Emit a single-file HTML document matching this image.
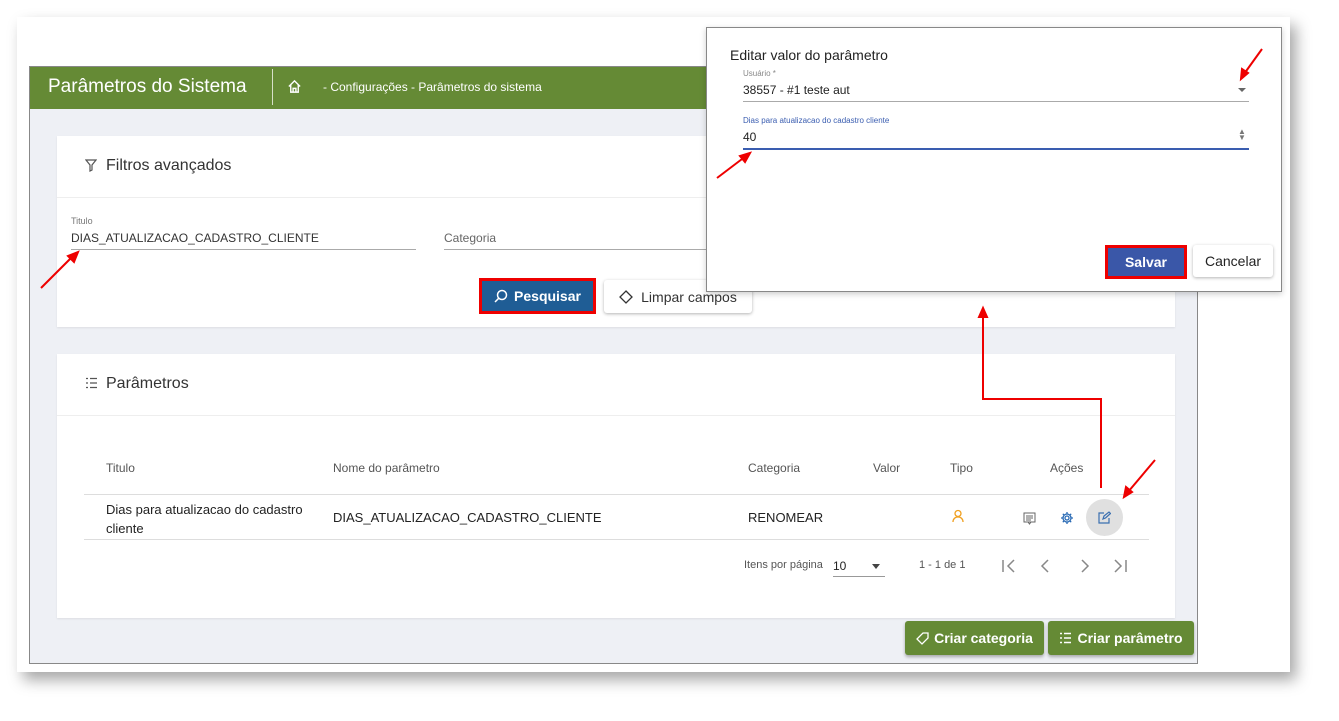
<!DOCTYPE html>
<html><head><meta charset="utf-8"><style>
*{box-sizing:border-box;margin:0;padding:0}
body{width:1339px;height:721px;background:#fff;font-family:"Liberation Sans",Arial,sans-serif;position:relative;overflow:hidden;color:#222}
.abs{position:absolute}
.page{left:17px;top:17px;width:1273px;height:655px;background:#fff;box-shadow:6px 8px 14px rgba(0,0,0,.35)}
.frame{left:29px;top:66px;width:1169px;height:598px;border:1px solid #888;background:#eef0f5}
.hdr{left:30px;top:67px;width:1167px;height:42px;background:#658a35;color:#fff}
.card{background:#fff;box-shadow:0 1px 2px rgba(0,0,0,.08)}
.t{position:absolute;white-space:nowrap}
.btn{position:absolute;border-radius:3px;font-size:14px;display:flex;align-items:center;justify-content:center}
</style></head><body>
<div class="abs page"></div>
<div class="abs frame"></div>
<div class="abs hdr">
 <div class="t" style="left:18px;top:9px;font-size:19px">Parâmetros do Sistema</div>
 <div class="abs" style="left:242px;top:2px;width:1px;height:36px;background:#d7e0c8"></div>
 <svg class="abs" style="left:257px;top:12px" width="15" height="15" viewBox="0 0 16 16" fill="none" stroke="#fff" stroke-width="1.5"><path d="M2 8 8 2l6 6M4 6.5V14h8V6.5M6.5 14v-4h3v4"/></svg>
 <div class="t" style="left:293px;top:13px;font-size:12px">- Configurações - Parâmetros do sistema</div>
</div>
<div class="abs card" style="left:57px;top:136px;width:1118px;height:191px">
 <svg class="abs" style="left:28px;top:23px" width="12" height="13" viewBox="0 0 12 13" fill="none" stroke="#555" stroke-width="1.2"><path d="M1 1h10L7 6v5l-2 1V6z"/></svg>
 <div class="t" style="left:49px;top:21px;font-size:16px;color:#333">Filtros avançados</div>
 <div class="abs" style="left:0;top:61px;width:1118px;height:1px;background:#eee"></div>
 <div class="t" style="left:14px;top:80px;font-size:9px;color:#777">Titulo</div>
 <div class="t" style="left:14px;top:95px;font-size:12px;color:#333">DIAS_ATUALIZACAO_CADASTRO_CLIENTE</div>
 <div class="abs" style="left:14px;top:113px;width:345px;height:1px;background:#aaa"></div>
 <div class="t" style="left:387px;top:95px;font-size:12px;color:#666">Categoria</div>
 <div class="abs" style="left:387px;top:113px;width:270px;height:1px;background:#aaa"></div>
</div>
<div class="btn" style="left:479px;top:278px;width:117px;height:36px;background:#1f5d95;border:3px solid #e00;color:#fff;font-weight:bold;border-radius:0">
 <svg width="14" height="14" viewBox="0 0 14 14" fill="none" stroke="#fff" stroke-width="1.5" style="margin-right:6px"><circle cx="8" cy="6" r="4.5"/><path d="M4.8 9.2 1 13"/></svg>Pesquisar</div>
<div class="btn" style="left:604px;top:280px;width:148px;height:33px;background:#fff;box-shadow:0 1px 3px rgba(0,0,0,.3);color:#333">
 <svg width="14" height="14" viewBox="0 0 14 14" fill="none" stroke="#333" stroke-width="1.3" style="margin-right:8px"><path d="M7 1l6 6-6 6-6-6z"/></svg>Limpar campos</div>
<div class="abs card" style="left:57px;top:354px;width:1118px;height:264px">
 <svg class="abs" style="left:28px;top:23px" width="13" height="12" viewBox="0 0 13 12" fill="none" stroke="#555" stroke-width="1.2"><path d="M1 1.5h2M1 6h2M1 10.5h2M5 1.5h7M5 6h7M5 10.5h7"/></svg>
 <div class="t" style="left:49px;top:21px;font-size:16px;color:#333">Parâmetros</div>
 <div class="abs" style="left:0;top:61px;width:1118px;height:1px;background:#eee"></div>
 <div class="t" style="left:49px;top:107px;font-size:12px;color:#555">Titulo</div>
 <div class="t" style="left:276px;top:107px;font-size:12px;color:#555">Nome do parâmetro</div>
 <div class="t" style="left:691px;top:107px;font-size:12px;color:#555">Categoria</div>
 <div class="t" style="left:816px;top:107px;font-size:12px;color:#555">Valor</div>
 <div class="t" style="left:893px;top:107px;font-size:12px;color:#555">Tipo</div>
 <div class="t" style="left:993px;top:107px;font-size:12px;color:#555">Ações</div>
 <div class="abs" style="left:27px;top:140px;width:1065px;height:1px;background:#ddd"></div>
 <div class="t" style="left:49px;top:146px;font-size:13px;color:#222;line-height:19px">Dias para atualizacao do cadastro<br>cliente</div>
 <div class="t" style="left:276px;top:156px;font-size:13px;color:#222">DIAS_ATUALIZACAO_CADASTRO_CLIENTE</div>
 <div class="t" style="left:691px;top:156px;font-size:13px;color:#222">RENOMEAR</div>
 <svg class="abs" style="left:895px;top:155px" width="12" height="14" viewBox="0 0 12 14" fill="none" stroke="#f0a020" stroke-width="1.3"><circle cx="6" cy="4.5" r="3"/><path d="M1 13c0-3 2-5 5-5s5 2 5 5"/></svg>
 <svg class="abs" style="left:966px;top:158px" width="13" height="13" viewBox="0 0 13 13" fill="none" stroke="#666" stroke-width="1"><rect x="1" y="1" width="11" height="9"/><path d="M3 4h7M3 6h7M3 8h5M5 10l1.5 2 1.5-2"/></svg>
 <svg class="abs" style="left:1003px;top:157px" width="14" height="14" viewBox="0 0 14 14" fill="none" stroke="#2a6bb5" stroke-width="1.3"><circle cx="7" cy="7" r="2"/><path d="M7 1v2M7 11v2M1 7h2M11 7h2M2.8 2.8l1.4 1.4M9.8 9.8l1.4 1.4M2.8 11.2l1.4-1.4M9.8 4.2l1.4-1.4"/><circle cx="7" cy="7" r="4"/></svg>
 <div class="abs" style="left:1029px;top:145px;width:37px;height:37px;border-radius:50%;background:#e0e0e0"></div>
 <svg class="abs" style="left:1041px;top:157px" width="13" height="13" viewBox="0 0 13 13" fill="none" stroke="#3a6fb0" stroke-width="1.2"><path d="M6 2H1v10h10V7M5 8l1-3 5-4 1.5 1.5-5 4.5z"/></svg>
 <div class="abs" style="left:27px;top:185px;width:1065px;height:1px;background:#ddd"></div>
 <div class="t" style="left:687px;top:205px;font-size:11px;color:#555">Itens por página</div>
 <div class="t" style="left:776px;top:205px;font-size:12px;color:#222">10</div>
 <div class="abs" style="left:815px;top:210px;border:4px solid transparent;border-top:5px solid #444"></div>
 <div class="abs" style="left:776px;top:222px;width:52px;height:1px;background:#999"></div>
 <div class="t" style="left:862px;top:205px;font-size:11px;color:#555">1 - 1 de 1</div>
 <svg class="abs" style="left:944px;top:204px" width="130" height="16" fill="none" stroke="#888" stroke-width="1.5">
  <path d="M2 2v12M13 2 7 8l6 6M47 2l-6 6 6 6M81 2l6 6-6 6M114 2l6 6-6 6M125 2v12"/>
 </svg>
</div>
<div class="btn" style="left:905px;top:621px;width:139px;height:34px;background:#658a35;color:#fff;font-weight:bold;box-shadow:0 2px 3px rgba(0,0,0,.3)">
 <svg width="13" height="13" viewBox="0 0 13 13" fill="none" stroke="#fff" stroke-width="1.3" style="margin-right:5px"><path d="M7 1h5v5l-6 6-5-5z"/></svg>Criar categoria</div>
<div class="btn" style="left:1048px;top:621px;width:146px;height:34px;background:#658a35;color:#fff;font-weight:bold;box-shadow:0 2px 3px rgba(0,0,0,.3)">
 <svg width="13" height="12" viewBox="0 0 13 12" fill="none" stroke="#fff" stroke-width="1.4" style="margin-right:5px"><path d="M1 1.5h2M1 6h2M1 10.5h2M5 1.5h7M5 6h7M5 10.5h7"/></svg>Criar parâmetro</div>
<div class="abs" style="left:706px;top:27px;width:576px;height:265px;background:#fff;border:1px solid #888;box-shadow:0 2px 6px rgba(0,0,0,.2)">
 <div class="t" style="left:23px;top:19px;font-size:14px;color:#222">Editar valor do parâmetro</div>
 <div class="t" style="left:36px;top:41px;font-size:8px;color:#888">Usuário *</div>
 <div class="t" style="left:36px;top:55px;font-size:12px;color:#222">38557 - #1 teste aut</div>
 <div class="abs" style="left:531px;top:60px;border:4px solid transparent;border-top:4px solid #666"></div>
 <div class="abs" style="left:36px;top:73px;width:506px;height:1px;background:#aaa"></div>
 <div class="t" style="left:36px;top:88px;font-size:8px;color:#3a5db0">Dias para atualizacao do cadastro cliente</div>
 <div class="t" style="left:36px;top:102px;font-size:12px;color:#222">40</div>
 <div class="t" style="left:531px;top:101px;font-size:8px;color:#777;line-height:6px">▲<br>▼</div>
 <div class="abs" style="left:36px;top:120px;width:506px;height:2px;background:#3a5db0"></div>
 <div class="btn" style="left:398px;top:217px;width:82px;height:34px;background:#3a57a8;border:3px solid #e00;border-radius:0;color:#fff;font-weight:bold">Salvar</div>
 <div class="btn" style="left:486px;top:217px;width:80px;height:32px;background:#fff;box-shadow:0 1px 3px rgba(0,0,0,.3);color:#222">Cancelar</div>
</div>
<svg class="abs" style="left:0;top:0" width="1339" height="721" fill="none" stroke="#e00" stroke-width="2">
 <path d="M41 288 73 256"/><path d="M78 252l-10 4 6 6z" fill="#e00"/>
 <path d="M717 178 746 156"/><path d="M750 153l-10 3 5 6z" fill="#e00"/>
 <path d="M1262 49 1244 74"/><path d="M1241 79l1-10 6 4z" fill="#e00"/>
 <path d="M1155 460 1128 492"/><path d="M1124 497l2-10 6 5z" fill="#e00"/>
 <path d="M1101 488V399H983V316"/><path d="M983 308l-4 9h8z" fill="#e00"/>
</svg>
</body></html>
